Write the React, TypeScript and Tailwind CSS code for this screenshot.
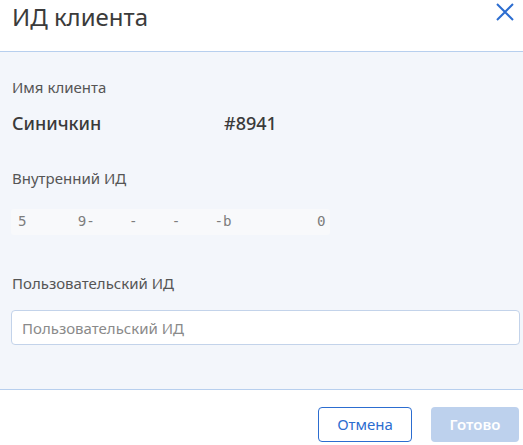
export default function App() {
  const internalId = '5      9-    -    -    -b          0';

  return (
    <div className="w-[523px] h-[445px] overflow-hidden bg-white font-['Noto_Sans',sans-serif] text-[#444]">
      <div className="flex h-[52px] items-start justify-between border-b border-[#b7cfee] pl-3 pr-2">
        <h1 className="text-[24px] leading-[33px] text-[#3b3b3b]">ИД клиента</h1>
        <button type="button" className="mt-[3px] mr-[1px] text-[#2c6dd0]" aria-label="Закрыть">
          <svg width="18" height="18" viewBox="0 0 18 18" fill="none" stroke="currentColor" strokeWidth="2">
            <path d="M1 1 L17 17 M17 1 L1 17" />
          </svg>
        </button>
      </div>

      <div className="flex h-[338px] flex-col border-b border-[#b7cfee] bg-[#f3f6fb] px-[11px] pt-[25px]">
        <p className="pl-[1px] text-[15px] leading-[20px] text-[#555]">Имя клиента</p>
        <div className="mt-[14px] flex pl-[1px] text-[18px] font-medium leading-[24px] text-[#3a3a3a]">
          <span className="w-[212px]">Синичкин</span>
          <span>#8941</span>
        </div>

        <p className="mt-[33px] pl-[1px] text-[15px] leading-[20px] text-[#555]">Внутренний ИД</p>
        <div className="mt-[21px] flex h-[26px] w-[319px] items-center rounded-[3px] bg-[#f8f9fb] px-[7px]">
          <span className="whitespace-pre font-['DejaVu_Sans_Mono',monospace] text-[14.2px] text-[#7d7d7d]">
            {internalId}
          </span>
        </div>

        <p className="mt-[38px] pl-[1px] text-[15px] leading-[20px] text-[#555]">Пользовательский ИД</p>
        <input
          type="text"
          placeholder="Пользовательский ИД"
          className="mt-[17px] h-[35px] w-[509px] rounded-[4px] border border-[#c3d3ea] bg-white px-[10px] text-[15px] text-[#333] placeholder:text-[#8a8a8a] focus:outline-none"
        />
      </div>

      <div className="flex justify-end gap-[19px] pt-[17px] pr-[4px]">
        <button
          type="button"
          className="h-[35px] w-[94px] rounded-[4px] border border-[#2c6dd0] bg-white text-[15px] text-[#2c6dd0]"
        >
          Отмена
        </button>
        <button
          type="button"
          disabled
          className="h-[35px] w-[88px] rounded-[4px] bg-[#bdd1ed] text-[15px] font-semibold text-white"
        >
          Готово
        </button>
      </div>
    </div>
  );
}
